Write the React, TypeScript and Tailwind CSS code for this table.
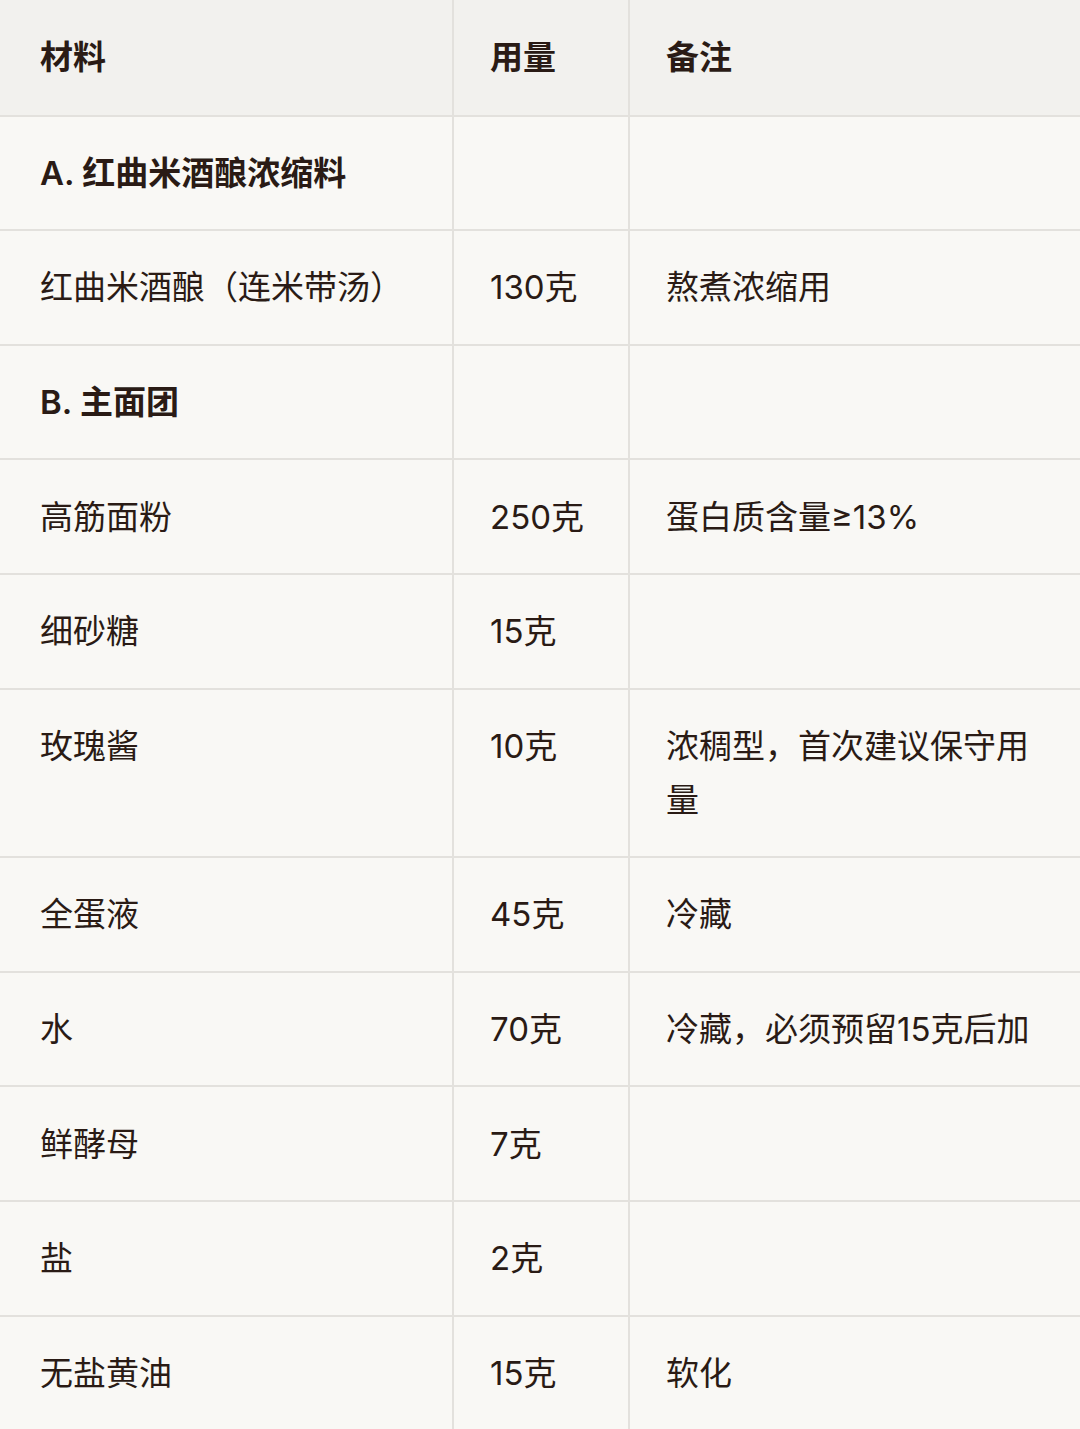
import React from 'react';

type Row = { name: string; qty?: string; note?: string; section?: boolean };

const rows: Row[] = [
  { name: 'A. 红曲米酒酿浓缩料', section: true },
  { name: '红曲米酒酿（连米带汤）', qty: '130克', note: '熬煮浓缩用' },
  { name: 'B. 主面团', section: true },
  { name: '高筋面粉', qty: '250克', note: '蛋白质含量≥13%' },
  { name: '细砂糖', qty: '15克' },
  { name: '玫瑰酱', qty: '10克', note: '浓稠型，首次建议保守用量' },
  { name: '全蛋液', qty: '45克', note: '冷藏' },
  { name: '水', qty: '70克', note: '冷藏，必须预留15克后加' },
  { name: '鲜酵母', qty: '7克' },
  { name: '盐', qty: '2克' },
  { name: '无盐黄油', qty: '15克', note: '软化' },
];

const cell = 'border-b-2 border-[#e3e1dd] py-[29.3px]';
const head = 'border-b-2 border-[#e3e1dd] pt-[29.6px] pb-[31px] bg-[#f2f1ee] font-semibold';

export default function App() {
  return (
    <div
      className="w-[1080px] h-[1429px] overflow-hidden bg-[#f9f8f5] text-[#2a1b15] text-[33px] leading-[54px]"
      style={{ fontFamily: 'Inter, "Noto Sans CJK SC", sans-serif' }}
    >
      <div className="grid grid-cols-[452px_176px_1fr]">
        <div className={`${head} pl-10`}>材料</div>
        <div className={`${head} border-l-2 pl-[36px]`}>用量</div>
        <div className={`${head} border-l-2 pl-[36px]`}>备注</div>
        {rows.map((r, i) => (
          <React.Fragment key={i}>
            <div className={`${cell} pl-10 ${r.section ? 'font-semibold' : ''}`}>{r.name}</div>
            <div className={`${cell} border-l-2 pl-[36px]`}>{r.qty}</div>
            <div className={`${cell} border-l-2 pl-[36px] pr-8`}>{r.note}</div>
          </React.Fragment>
        ))}
      </div>
    </div>
  );
}
